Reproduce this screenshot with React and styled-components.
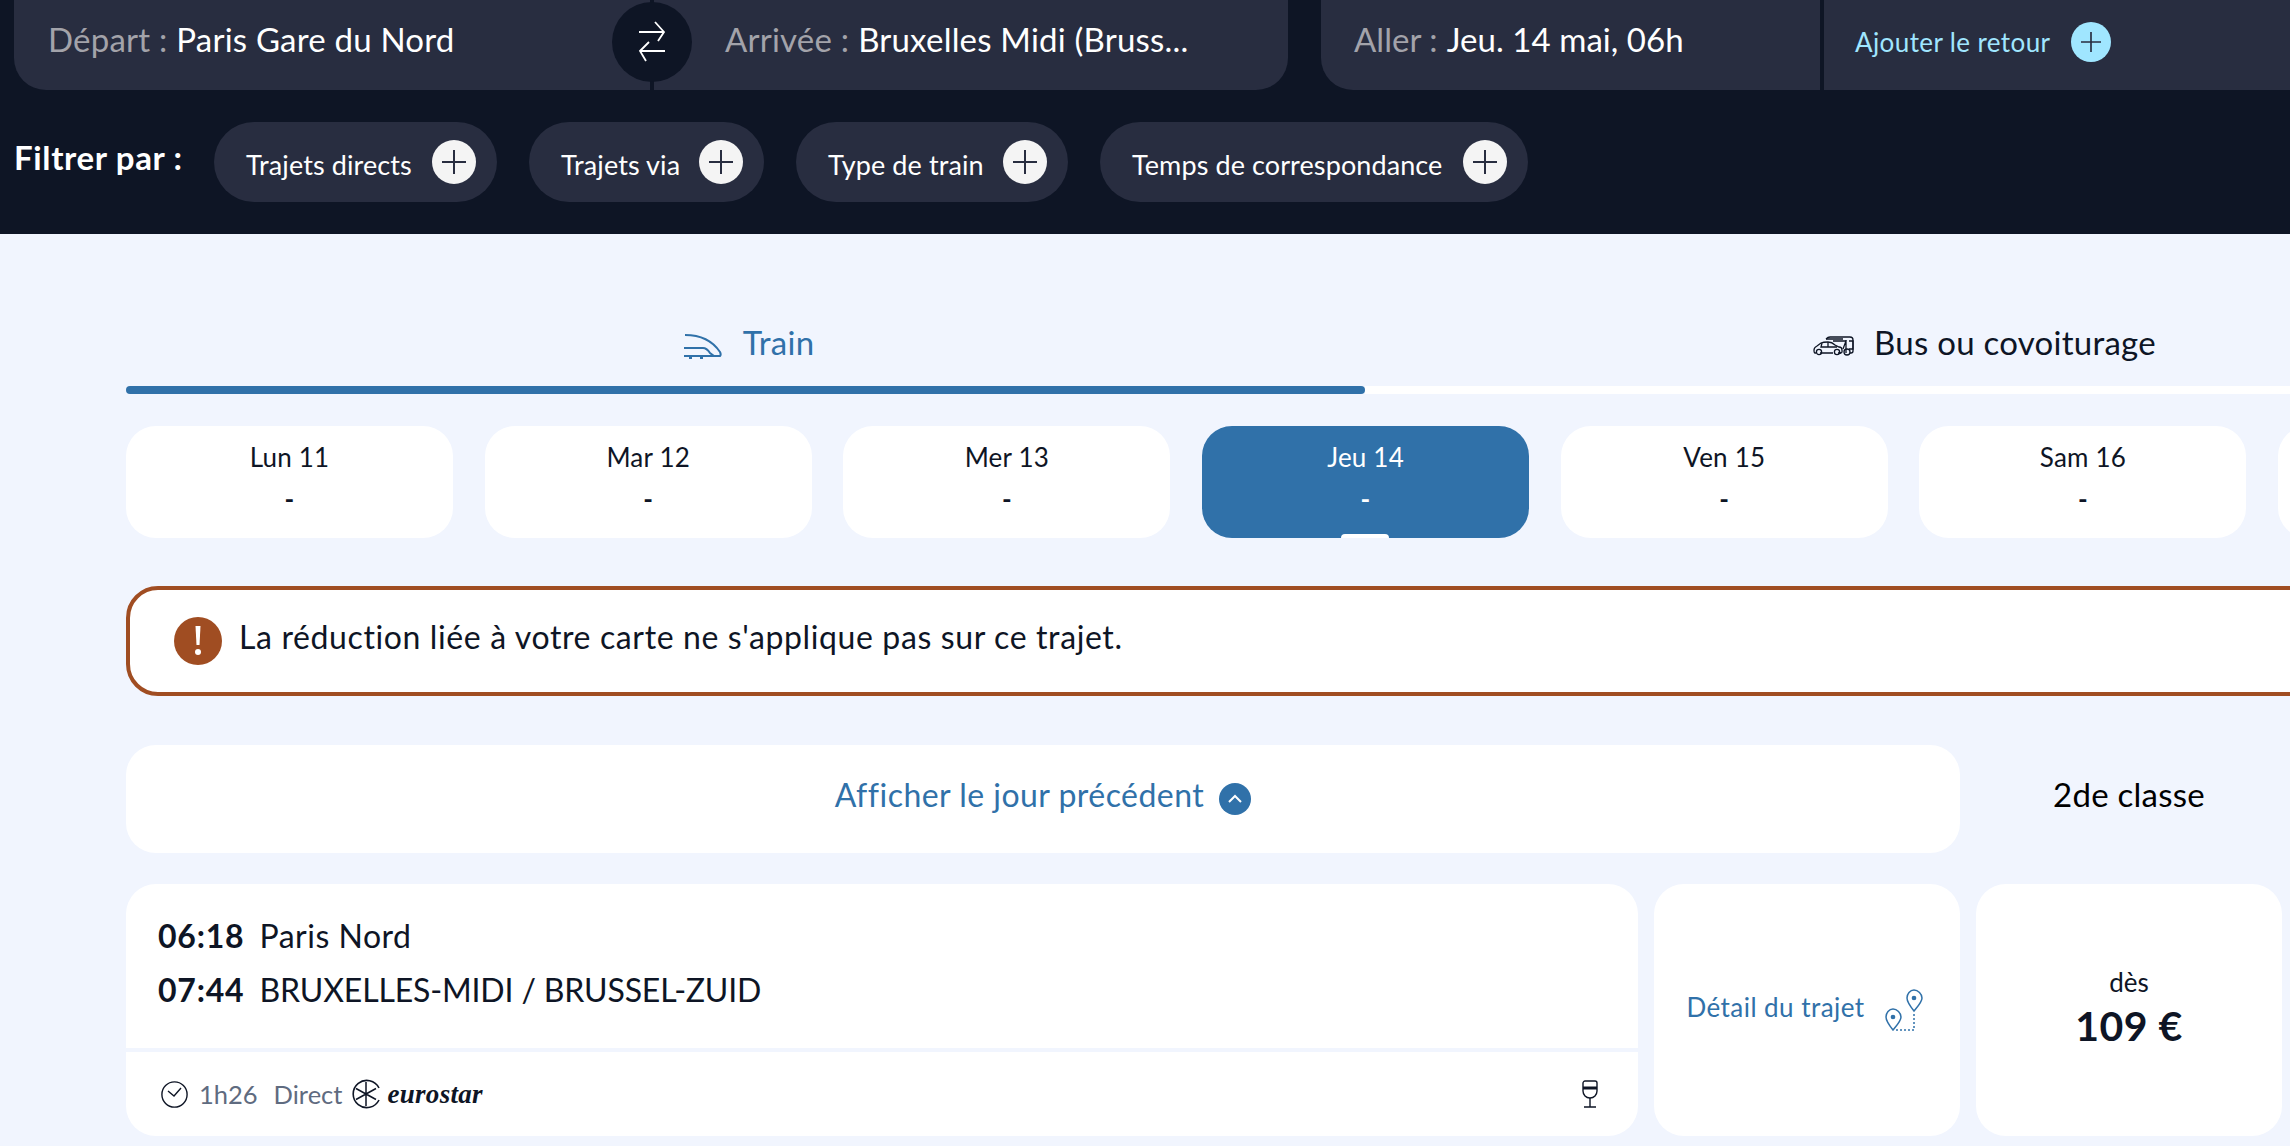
import React from "react"
import styled, { createGlobalStyle } from "styled-components"

const GlobalStyle = createGlobalStyle`
  html, body {
    margin: 0;
    padding: 0;
    width: 2290px;
    height: 1146px;
    overflow: hidden;
    background: #f1f5fe;
    font-family: Lato, "Open Sans", sans-serif;
    color: #0e1525;
  }
`

const Header = styled.header`
  background: #0e1525;
  height: 234px;
  box-sizing: border-box;
  padding-left: 14px;
`

const SearchRow = styled.div`
  display: flex;
  gap: 33px;
  height: 90px;
`

const StationCard = styled.div`
  position: relative;
  width: 1274px;
  display: grid;
  grid-template-columns: 636px 638px;
  background: #282d40;
  border-radius: 0 0 32px 32px;
`

const Field = styled.div`
  display: flex;
  align-items: center;
  box-sizing: border-box;
  height: 78px;
  padding-left: ${(p) => p.$pad}px;
  font-size: 33px;
  letter-spacing: ${(p) => p.$ls}px;
  color: #fff;
  white-space: nowrap;
  & > span { color: #a3a3aa; margin-right: 9px; }
`

const CenterLine = styled.div`
  position: absolute;
  left: 636px;
  top: 0;
  width: 4px;
  height: 90px;
  background: #0e1525;
`

const SwapButton = styled.div`
  position: absolute;
  left: 598px;
  top: 2px;
  width: 80px;
  height: 80px;
  border-radius: 50%;
  background: #0e1525;
  display: flex;
  align-items: center;
  justify-content: center;
`

const DateCard = styled.div`
  flex: 1;
  display: grid;
  grid-template-columns: 499px 4px 1fr;
  background: #282d40;
  border-bottom-left-radius: 32px;
`

const Divider = styled.div`
  background: #0e1525;
`

const AddReturn = styled.div`
  display: flex;
  align-items: center;
  height: 84px;
  padding-left: 31px;
  gap: 21px;
  font-size: 26px;
  letter-spacing: 0.4px;
  color: #a0e6ff;
`

const PlusCircle = styled.span`
  display: flex;
  align-items: center;
  justify-content: center;
  flex: none;
  width: ${(p) => p.$size}px;
  height: ${(p) => p.$size}px;
  border-radius: 50%;
  background: ${(p) => p.$bg};
`

const FilterRow = styled.div`
  display: flex;
  align-items: center;
  margin-top: 32px;
  height: 80px;
`

const FilterLabel = styled.div`
  width: 200px;
  flex: none;
  font-size: 33px;
  font-weight: 700;
  color: #fff;
  letter-spacing: 0.65px;
  margin-bottom: 10px;
`

const Chips = styled.div`
  display: flex;
  gap: 32px;
`

const Chip = styled.div`
  display: flex;
  align-items: center;
  justify-content: space-between;
  box-sizing: border-box;
  width: ${(p) => p.$w}px;
  height: 80px;
  padding: 0 21px 0 32px;
  border-radius: 40px;
  background: #282d40;
  color: #fff;
  font-size: 27px;
  letter-spacing: 0.1px;
  white-space: nowrap;
  & > span:first-child { padding-top: 4px; }
`

const Main = styled.main`
  width: 2478px;
  padding: 88px 0 0 126px;
`

const Tabs = styled.div`
  display: grid;
  grid-template-columns: 1239px 1239px;
`

const Tab = styled.div`
  display: flex;
  flex-direction: column;
  color: ${(p) => (p.$active ? "#3071a9" : "#0e1525")};
`

const TabLabel = styled.div`
  display: flex;
  align-items: center;
  justify-content: center;
  gap: ${(p) => p.$gap}px;
  height: 40px;
  margin-bottom: 24px;
  padding-left: ${(p) => p.$shift}px;
  font-size: 33px;
  letter-spacing: 0.25px;
  & > svg { margin-top: 8px; }
`

const TabBar = styled.div`
  height: 8px;
  background: ${(p) => (p.$active ? "#3071a9" : "#fff")};
  border-radius: ${(p) => (p.$active ? "4px" : "0")};
`

const DateStrip = styled.div`
  display: flex;
  gap: 31.7px;
  margin-top: 32px;
`

const DayCard = styled.div`
  position: relative;
  flex: none;
  width: 327px;
  height: 112px;
  box-sizing: border-box;
  padding-top: 15px;
  border-radius: 30px;
  text-align: center;
  font-size: 26px;
  letter-spacing: 0.2px;
  line-height: 32px;
  background: ${(p) => (p.$active ? "#3071a9" : "#fff")};
  color: ${(p) => (p.$active ? "#fff" : "#0e1525")};
`

const DayPrice = styled.div`
  margin-top: 10px;
  font-weight: 700;
`

const DayTick = styled.div`
  position: absolute;
  left: 139px;
  bottom: 0;
  width: 48px;
  height: 4px;
  background: #fff;
  border-radius: 4px 4px 0 0;
`

const Alert = styled.div`
  display: flex;
  align-items: center;
  gap: 17px;
  box-sizing: border-box;
  margin-top: 48px;
  height: 110px;
  padding-left: 44px;
  background: #fff;
  border: 4px solid #a04d22;
  border-radius: 32px;
  font-size: 32px;
  letter-spacing: 0.62px;
`

const AlertText = styled.span`
  margin-bottom: 10px;
`

const AlertIcon = styled.span`
  display: flex;
  align-items: center;
  justify-content: center;
  flex: none;
  width: 48px;
  height: 48px;
  border-radius: 50%;
  background: #a04d22;
`

const PrevRow = styled.div`
  display: grid;
  grid-template-columns: 1834px 306px;
  gap: 16px;
  margin-top: 49px;
  height: 108px;
`

const PrevButton = styled.div`
  display: flex;
  align-items: center;
  justify-content: center;
  gap: 15px;
  background: #fff;
  border-radius: 30px;
  font-size: 32px;
  letter-spacing: 0.47px;
  color: #3071a9;
  & > span:first-child { margin-bottom: 10px; }
`

const Chevron = styled.span`
  display: flex;
  align-items: center;
  justify-content: center;
  width: 32px;
  height: 32px;
  border-radius: 50%;
  background: #3071a9;
`

const ClassLabel = styled.div`
  display: flex;
  align-items: center;
  justify-content: center;
  padding-bottom: 10px;
  font-size: 33px;
  letter-spacing: 0.25px;
  color: #000;
`

const ResultRow = styled.div`
  display: grid;
  grid-template-columns: 1512px 306px 306px;
  gap: 16px;
  margin-top: 31px;
  height: 252px;
`

const Card = styled.div`
  background: #fff;
  border-radius: 30px;
`

const Journey = styled(Card)`
  display: flex;
  flex-direction: column;
`

const Stops = styled.div`
  box-sizing: border-box;
  height: 168px;
  padding: 24px 32px 0;
  border-bottom: 4px solid #f1f5fe;
`

const Stop = styled.div`
  display: flex;
  gap: 15px;
  height: 54px;
  align-items: center;
  font-size: 32px;
  letter-spacing: ${(p) => p.$ls}px;
  & > b { font-weight: 700; letter-spacing: 0.8px; }
`

const Meta = styled.div`
  flex: 1;
  display: flex;
  align-items: center;
  padding: 0 31px 0 35px;
  font-size: 25.5px;
  color: #5f6b80;
`

const Duration = styled.span`
  margin-left: 11px;
  margin-right: 16px;
`

const Carrier = styled.span`
  display: flex;
  align-items: center;
  gap: 6px;
  margin-left: 9px;
`

const CarrierName = styled.span`
  font-family: "Liberation Serif", serif;
  font-style: italic;
  font-weight: 700;
  font-size: 27px;
  letter-spacing: 0.3px;
  color: #0e1525;
`

const Amenity = styled.span`
  margin-left: auto;
  margin-right: 8px;
  display: flex;
`

const DetailCard = styled(Card)`
  display: flex;
  align-items: center;
  justify-content: center;
  gap: 20px;
  padding-right: 5px;
  font-size: 26px;
  letter-spacing: 0.45px;
  color: #3071a9;
  & > span { margin-bottom: 6px; }
`

const PriceCard = styled(Card)`
  display: flex;
  flex-direction: column;
  align-items: center;
  justify-content: center;
  padding-bottom: 4px;
`

const PriceFrom = styled.div`
  font-size: 26px;
  line-height: 34px;
  margin-bottom: 2px;
`

const PriceValue = styled.div`
  font-size: 41px;
  line-height: 50px;
  font-weight: 700;
  letter-spacing: 0.5px;
`

const Plus = ({ size, color }) => (
  <svg width={size} height={size} viewBox="0 0 24 24" fill="none" stroke={color} strokeWidth="2">
    <path d="M12 0v24M0 12h24" />
  </svg>
)

const SwapIcon = () => (
  <svg width="28" height="42" viewBox="0 0 28 42" fill="none" stroke="#fff" strokeWidth="1.8">
    <path d="M1 11h25M17 1l9 10-6 9" />
    <path d="M27 30H2M11 21l-9 9 6 10" />
  </svg>
)

const TrainIcon = () => (
  <svg width="40" height="26" viewBox="0 0 40 26" fill="none" stroke="#3071a9" strokeWidth="2">
    <path d="M2 2c14 0 27 5 35 17 1 2 1 3 0 4H26" />
    <path d="M1 15h19c3 0 5 2 7 5l4 3H1" />
    <path d="M6 25h3M17 25h3" />
  </svg>
)

const BusCarIcon = () => (
  <svg width="42" height="20" viewBox="0 0 42 20" fill="none" stroke="#0e1525" strokeWidth="1.3">
    <path d="M13 3c1-1 2-2 4-2h20c2 0 3 1 3 3v11c0 1-1 2-2 2h-1" />
    <path d="M13 3h17M20 5h13l-3 8M33 4v13M36 5h4v8h-4" />
    <path d="M3 17H2c-1 0-1-1-1-3s1-3 3-4l4-3c2-1 4-1 7-1s5 1 7 3l4 2c2 0 3 1 3 3v2c0 1-1 1-2 1" />
    <path d="M7 17h13M25 17h3M9 7l-1 4h16M15 6v5" />
    <circle cx="6" cy="16" r="2.6" />
    <circle cx="24" cy="16" r="2.6" />
    <circle cx="34" cy="16" r="3" />
  </svg>
)

const AlertMark = () => (
  <svg width="8" height="32" viewBox="0 0 8 32" fill="#fff">
    <path d="M1.5 1h5l-1 19h-3z" />
    <circle cx="4" cy="27" r="3" />
  </svg>
)

const ChevronUp = () => (
  <svg width="16" height="10" viewBox="0 0 16 10" fill="none" stroke="#fff" strokeWidth="2">
    <path d="M2 8l6-6 6 6" />
  </svg>
)

const ClockIcon = () => (
  <svg width="27" height="27" viewBox="0 0 27 27" fill="none" stroke="#0e1525" strokeWidth="1.4">
    <circle cx="13.5" cy="13.5" r="12.6" />
    <path d="M7 10l6 5 7-8" />
  </svg>
)

const EurostarLogo = () => (
  <svg width="30" height="30" viewBox="0 0 30 30" fill="none" stroke="#0e1525">
    <path d="M28 9A13.6 13.6 0 1 0 28 21" strokeWidth="1.6" />
    <path d="M15 3v24M5 9.5l20 11M5 20.5l20-11" strokeWidth="1.5" />
  </svg>
)

const WineIcon = () => (
  <svg width="18" height="28" viewBox="0 0 18 28" fill="none" stroke="#0e1525" strokeWidth="1.4">
    <path d="M2 3c0-1 1-2 2-2h10c1 0 2 1 2 2v8c0 4-3 7-7 7s-7-3-7-7z" />
    <path d="M2 8h14" strokeWidth="3" />
    <path d="M9 18v9M3 27h12" />
  </svg>
)

const PinsIcon = () => (
  <svg width="38" height="42" viewBox="0 0 38 42" fill="none" stroke="#3071a9" strokeWidth="1.5">
    <path d="M29 22c-4-5-7-9-7-13 0-4 3-8 7-8s8 4 8 8c0 4-4 8-8 13z" />
    <path d="M8 41c-4-5-7-9-7-13 0-4 3-8 7-8s8 4 8 8c0 4-4 8-8 13z" />
    <circle cx="29" cy="9" r="1.6" fill="#3071a9" />
    <circle cx="8" cy="28" r="1.6" fill="#3071a9" />
    <path d="M29 25v16H10" strokeDasharray="2 2" />
  </svg>
)

const filters = [
  { label: "Trajets directs", w: 283 },
  { label: "Trajets via", w: 235 },
  { label: "Type de train", w: 272 },
  { label: "Temps de correspondance", w: 428 },
]

// the last card only shows its left edge in the window, it stays empty
const days = ["Lun 11", "Mar 12", "Mer 13", "Jeu 14", "Ven 15", "Sam 16", ""]

const App = () => {
  return (
    <>
      <GlobalStyle />
      <Header>
        <SearchRow>
          <StationCard>
            <Field $pad={34} $ls={0.2}><span>Départ :</span>Paris Gare du Nord</Field>
            <Field $pad={75} $ls={0.2}><span>Arrivée :</span>Bruxelles Midi (Bruss...</Field>
            <CenterLine />
            <SwapButton><SwapIcon /></SwapButton>
          </StationCard>
          <DateCard>
            <Field $pad={33} $ls={0.05}><span>Aller :</span>Jeu. 14 mai, 06h</Field>
            <Divider />
            <AddReturn>
              Ajouter le retour
              <PlusCircle $size={40} $bg="#a0e6ff"><Plus size={20} color="#282d40" /></PlusCircle>
            </AddReturn>
          </DateCard>
        </SearchRow>
        <FilterRow>
          <FilterLabel>Filtrer par :</FilterLabel>
          <Chips>
            {filters.map((f) => (
              <Chip key={f.label} $w={f.w}>
                <span>{f.label}</span>
                <PlusCircle $size={44} $bg="#f4f4f4"><Plus size={24} color="#282d40" /></PlusCircle>
              </Chip>
            ))}
          </Chips>
        </FilterRow>
      </Header>

      <Main>
        <Tabs>
          <Tab $active>
            <TabLabel $gap={20} $shift={6}><TrainIcon />Train</TabLabel>
            <TabBar $active />
          </Tab>
          <Tab>
            <TabLabel $gap={19} $shift={0}><BusCarIcon />Bus ou covoiturage</TabLabel>
            <TabBar />
          </Tab>
        </Tabs>

        <DateStrip>
          {days.map((d) => (
            <DayCard key={d} $active={d === "Jeu 14"}>
              {d}
              {d && <DayPrice>-</DayPrice>}
              {d === "Jeu 14" && <DayTick />}
            </DayCard>
          ))}
        </DateStrip>

        <Alert>
          <AlertIcon><AlertMark /></AlertIcon>
          <AlertText>La réduction liée à votre carte ne s'applique pas sur ce trajet.</AlertText>
        </Alert>

        <PrevRow>
          <PrevButton>
            <span>Afficher le jour précédent</span>
            <Chevron><ChevronUp /></Chevron>
          </PrevButton>
          <ClassLabel>2de classe</ClassLabel>
        </PrevRow>

        <ResultRow>
          <Journey>
            <Stops>
              <Stop $ls={0.5}><b>06:18</b>Paris Nord</Stop>
              <Stop $ls={-0.15}><b>07:44</b>BRUXELLES-MIDI / BRUSSEL-ZUID</Stop>
            </Stops>
            <Meta>
              <ClockIcon />
              <Duration>1h26</Duration>
              Direct
              <Carrier>
                <EurostarLogo />
                <CarrierName>eurostar</CarrierName>
              </Carrier>
              <Amenity><WineIcon /></Amenity>
            </Meta>
          </Journey>
          <DetailCard>
            <span>Détail du trajet</span>
            <PinsIcon />
          </DetailCard>
          <PriceCard>
            <PriceFrom>dès</PriceFrom>
            <PriceValue>109 €</PriceValue>
          </PriceCard>
        </ResultRow>
      </Main>
    </>
  )
}

export default App
